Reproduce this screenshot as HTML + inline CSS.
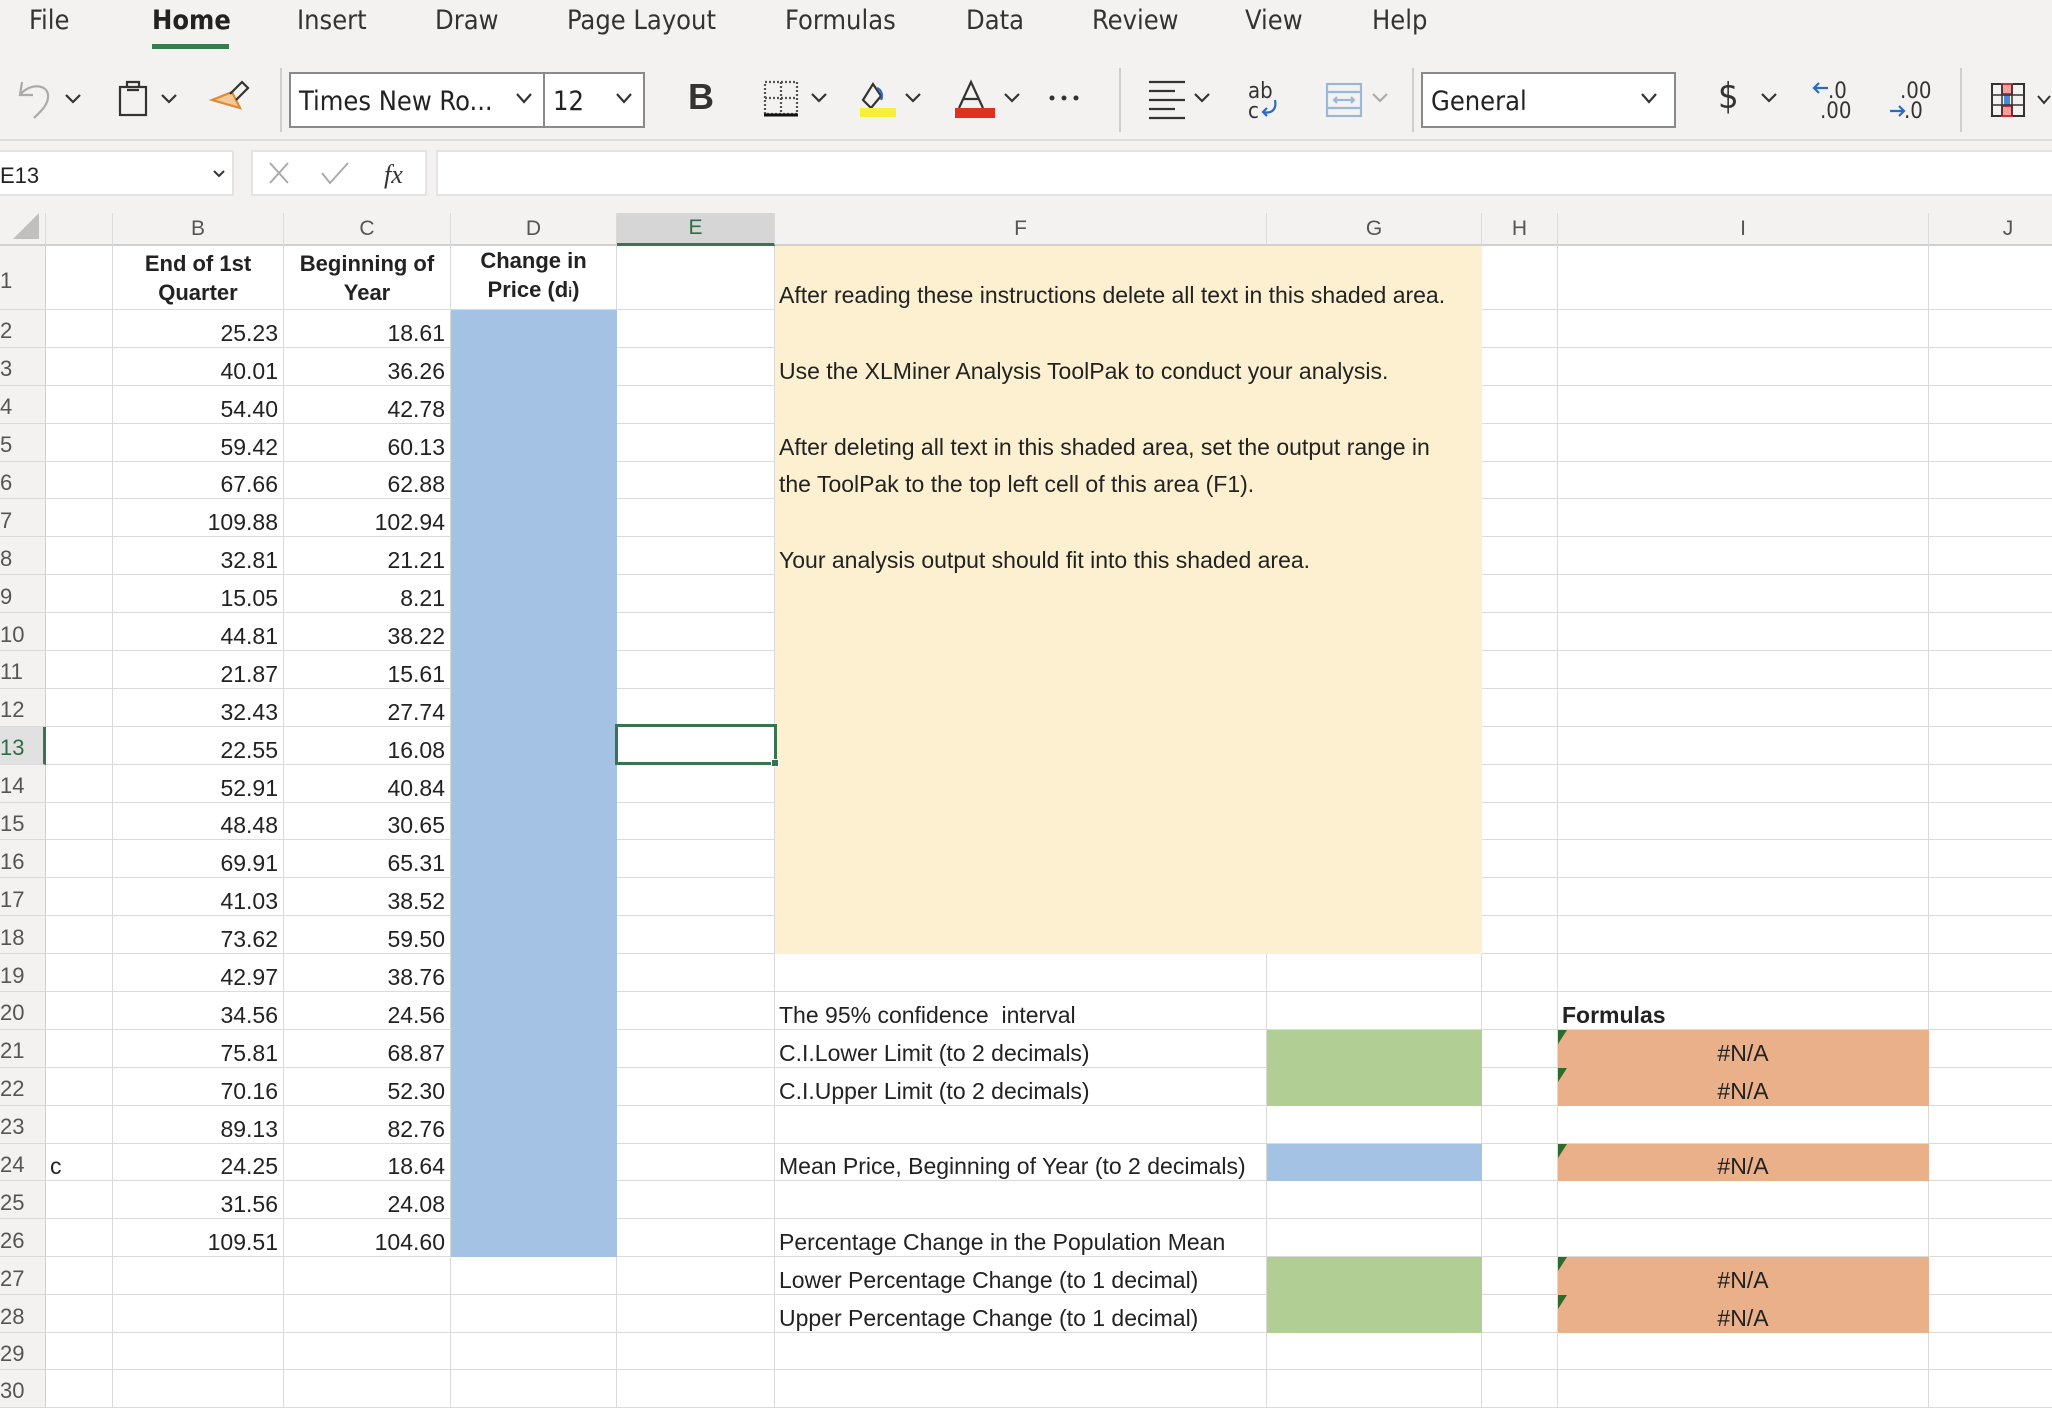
<!DOCTYPE html>
<html><head><meta charset="utf-8">
<style>
*{box-sizing:border-box;margin:0;padding:0}
body{width:2052px;height:1396px;overflow:hidden;background:#fff;font-family:"Liberation Sans",Arial,sans-serif;position:relative}
.top{position:absolute;left:0;top:0;width:2052px;height:141px;background:#f3f2f1;border-bottom:2px solid #dcdcdc}
.tab{position:absolute;top:5px;font-size:27px;color:#333;font-family:"DejaVu Sans Condensed","Liberation Sans",sans-serif;font-stretch:condensed}
.ul{position:absolute;left:152px;top:44px;width:77px;height:5px;background:#387b4f}
.ico{position:absolute}
.box{position:absolute;background:#fff;border:2px solid #8a8a8a;font-size:27px;color:#222;font-family:"DejaVu Sans Condensed","Liberation Sans",sans-serif}
.sep{position:absolute;top:68px;width:2px;height:64px;background:#cfcfcf}
.fbar{position:absolute;top:141px;left:0;width:2052px;height:72px;background:#f3f2f1}
.wb{position:absolute;background:#fff;border:2px solid #e3e3e3}
table{position:absolute;left:0;top:213px;border-collapse:separate;border-spacing:0;table-layout:fixed;width:2100px;font-size:23px;color:#222}
td,th{border-right:1.5px solid #dadada;border-bottom:1.5px solid #dadada;overflow:visible;white-space:nowrap;vertical-align:bottom;padding:0 4px 1px 4px;line-height:26px}
th{background:#f3f2f1;font-weight:normal;color:#555;font-size:22px}
thead th{text-align:center;vertical-align:middle;padding:0;height:33px;border-bottom:2px solid #d0d0d0;font-size:21px}
tbody th{text-align:left;padding-left:0;vertical-align:middle;padding-top:6px;padding-bottom:0;border-bottom:1.5px solid #dadada;border-right:1.5px solid #cfcfcf}
tbody tr{height:37.9px}
.n{text-align:right;padding-right:5px}
.d{background:#a4c2e4;border-color:#a4c2e4}
.y{background:#fcf0d0;border-right-color:#fcf0d0;border-bottom-color:#fcf0d0}
.g{background:#b1cf95;border-color:#b1cf95}
.o{background:#e9b08a;border-color:#e9b08a;text-align:center;position:relative}
.o::before{content:"";position:absolute;left:0;top:0;border-top:14px solid #2e6b2a;border-right:9px solid transparent}
.bl{background:#a4c2e4;border-color:#a4c2e4}
.hb{font-weight:bold;text-align:center;white-space:normal;line-height:29px;padding-bottom:2px;font-size:22px}
</style></head><body>
<div class="top">
<div class="tab" style="left:29px">File</div>
<div class="tab" style="left:152px;color:#222;font-weight:bold">Home</div>
<div class="tab" style="left:297px">Insert</div>
<div class="tab" style="left:435px">Draw</div>
<div class="tab" style="left:567px">Page Layout</div>
<div class="tab" style="left:785px">Formulas</div>
<div class="tab" style="left:966px">Data</div>
<div class="tab" style="left:1092px">Review</div>
<div class="tab" style="left:1245px">View</div>
<div class="tab" style="left:1372px">Help</div>
<div class="ul"></div>

<svg class="ico" style="left:14px;top:78px" width="150" height="42" viewBox="0 0 150 42" fill="none" stroke-width="2.2">
<path d="M8 4 L6 17 L19 17 M6 17 C16 4 36 6 34 20 C33 28 26 34 20 40" stroke="#aaa"/>
<path d="M52 17 L59 24 L66 17" stroke="#333"/>
<rect x="106" y="9" width="26" height="28" stroke="#333"/><path d="M113 9 V4 H125 V9 M113 12 H125" stroke="#333"/>
</svg>
<svg class="ico" style="left:160px;top:78px" width="100" height="42" viewBox="0 0 100 42" fill="none" stroke-width="2.2">
<path d="M2 17 L9 24 L16 17" stroke="#333"/>
<path d="M52 22 L72 14 L80 30 Z" fill="#f5c89a" stroke="#e08a30"/><path d="M70 16 L82 4 L88 10 L76 22" stroke="#333"/>
</svg>
<div class="sep" style="left:280px"></div>
<div class="box" style="left:289px;top:72px;width:256px;height:56px;padding:12px 8px">Times New Ro...</div>
<div class="box" style="left:543px;top:72px;width:102px;height:56px;padding:12px 8px">12</div>
<svg class="ico" style="left:515px;top:92px" width="120" height="14" fill="none" stroke="#333" stroke-width="2.2"><path d="M2 2 L9 10 L16 2 M102 2 L109 10 L116 2"/></svg>
<div style="position:absolute;left:688px;top:76px;font-size:36px;font-weight:bold;color:#333">B</div>
<svg class="ico" style="left:760px;top:78px" width="340" height="44" fill="none" stroke-width="2.2">
<rect x="5" y="4" width="32" height="32" stroke="#555" stroke-dasharray="2 2"/><path d="M21 4 V36 M5 20 H37" stroke="#555" stroke-dasharray="2 2"/><path d="M4 37 H38" stroke="#111" stroke-width="3"/>
<path d="M52 16 L59 23 L66 16" stroke="#333"/>
<path d="M103 22 L113 6 L121 18 L111 30 Z" stroke="#333"/><path d="M117 10 C122 12 123 18 121 22" stroke="#2a6bbf"/><rect x="100" y="30" width="36" height="9" fill="#f8ef3a" stroke="none"/>
<path d="M146 16 L153 23 L160 16" stroke="#333"/>
<path d="M199 30 L211 4 L223 30 M203 21 H219" stroke="#333"/><rect x="195" y="30" width="40" height="10" fill="#e03020" stroke="none"/>
<path d="M245 16 L252 23 L259 16" stroke="#333"/>
<circle cx="292" cy="20" r="2.5" fill="#333" stroke="none"/><circle cx="304" cy="20" r="2.5" fill="#333" stroke="none"/><circle cx="316" cy="20" r="2.5" fill="#333" stroke="none"/>
</svg>
<div class="sep" style="left:1119px"></div>
<svg class="ico" style="left:1145px;top:78px" width="260" height="44" fill="none" stroke-width="2.2">
<path d="M4 4 H40 M4 13 H30 M4 22 H40 M4 31 H30 M4 40 H40" stroke="#333"/>
<path d="M50 16 L57 23 L64 16" stroke="#333"/>
<text x="103" y="20" font-size="22" fill="#333" stroke="none" font-family="DejaVu Sans Condensed">ab</text><text x="103" y="40" font-size="22" fill="#333" stroke="none" font-family="DejaVu Sans Condensed">c</text><path d="M130 22 C132 32 126 36 118 34 M122 30 L118 34 L122 38" stroke="#2a6bbf"/>
<rect x="182" y="6" width="34" height="32" stroke="#9ab8d8"/><path d="M182 14 H216 M182 30 H216 M190 22 H208 M192 19 L189 22 L192 25 M206 19 L209 22 L206 25" stroke="#9ab8d8"/>
<path d="M228 16 L235 23 L242 16" stroke="#aaa"/>
</svg>
<div class="sep" style="left:1412px"></div>
<div class="box" style="left:1421px;top:72px;width:255px;height:56px;padding:12px 8px">General</div>
<svg class="ico" style="left:1640px;top:92px" width="24" height="14" fill="none" stroke="#333" stroke-width="2.2"><path d="M2 2 L9 10 L16 2"/></svg>
<div style="position:absolute;left:1718px;top:76px;font-size:36px;color:#333;font-family:'DejaVu Sans Condensed',sans-serif">$</div>
<svg class="ico" style="left:1756px;top:78px" width="300" height="44" fill="none" stroke-width="2.2">
<path d="M6 16 L13 23 L20 16" stroke="#333"/>
<path d="M58 10 H72 M63 5 L58 10 L63 15" stroke="#2a6bbf"/>
<text x="72" y="20" font-size="22" fill="#333" stroke="none" font-family="DejaVu Sans Condensed">.0</text>
<text x="64" y="40" font-size="22" fill="#333" stroke="none" font-family="DejaVu Sans Condensed">.00</text>
<text x="144" y="20" font-size="22" fill="#333" stroke="none" font-family="DejaVu Sans Condensed">.00</text>
<path d="M134 33 H148 M143 28 L148 33 L143 38" stroke="#2a6bbf"/>
<text x="148" y="40" font-size="22" fill="#333" stroke="none" font-family="DejaVu Sans Condensed">.0</text>
</svg>
<div class="sep" style="left:1960px"></div>
<svg class="ico" style="left:1988px;top:82px" width="64" height="40" fill="none" stroke-width="2">
<rect x="4" y="2" width="32" height="32" stroke="#333"/><rect x="14" y="2" width="10" height="10" fill="#f2a0a0" stroke="#d03030"/><rect x="14" y="24" width="10" height="10" fill="#f2a0a0" stroke="#d03030"/><rect x="16" y="13" width="6" height="10" fill="#4a8ad8" stroke="none"/>
<path d="M4 13 H36 M4 23 H36 M14 2 V34 M24 2 V34" stroke="#333" stroke-width="1.5"/>
<path d="M50 14 L56 21 L62 14" stroke="#333"/>
</svg>
</div>
<div class="fbar">
<div class="wb" style="left:-2px;top:9px;width:236px;height:46px;font-size:22px;padding:11px 0 0 0;color:#222">E13</div>
<svg class="ico" style="left:212px;top:28px" width="14" height="10" fill="none" stroke="#333" stroke-width="2"><path d="M2 2 L7 7 L12 2"/></svg>
<div class="wb" style="left:251px;top:9px;width:176px;height:46px"></div>
<svg class="ico" style="left:266px;top:18px" width="150" height="30" fill="none" stroke="#aaa" stroke-width="2"><path d="M4 4 L22 24 M22 4 L4 24 M56 14 L64 24 L82 4"/><text x="118" y="24" font-size="26" fill="#333" stroke="none" font-style="italic" font-family="Liberation Serif">fx</text></svg>
<div class="wb" style="left:436px;top:9px;width:1630px;height:46px"></div>
</div>

<table>
<colgroup><col style="width:46px"><col style="width:67px"><col style="width:171px"><col style="width:167px"><col style="width:166px"><col style="width:158px"><col style="width:492px"><col style="width:215px"><col style="width:76px"><col style="width:371px"><col style="width:171px"></colgroup>
<thead><tr><th style="position:relative"><svg style="position:absolute;right:4px;bottom:3px" width="30" height="28"><path d="M28 0 V26 H2 Z" fill="#c0c0c0"/></svg></th><th></th><th>B</th><th>C</th><th>D</th><th style="background:#d6d6d6;color:#2f6e44;border-bottom:3px solid #3a7350">E</th><th>F</th><th>G</th><th>H</th><th>I</th><th style="padding-right:12px">J</th></tr></thead>
<tbody>
<tr style="height:64px"><th>1</th><td></td><td class="hb">End of 1st Quarter</td><td class="hb">Beginning of Year</td><td class="hb">Change in Price (d<span style="font-size:14px">i</span>)</td><td></td><td class="y">After reading these instructions delete all text in this shaded area.</td><td class="y"></td><td></td><td></td><td></td></tr>
<tr><th>2</th><td></td><td class="n">25.23</td><td class="n">18.61</td><td class="d"></td><td></td><td class="y"></td><td class="y"></td><td></td><td></td><td></td></tr>
<tr><th>3</th><td></td><td class="n">40.01</td><td class="n">36.26</td><td class="d"></td><td></td><td class="y">Use the XLMiner Analysis ToolPak to conduct your analysis.</td><td class="y"></td><td></td><td></td><td></td></tr>
<tr><th>4</th><td></td><td class="n">54.40</td><td class="n">42.78</td><td class="d"></td><td></td><td class="y"></td><td class="y"></td><td></td><td></td><td></td></tr>
<tr><th>5</th><td></td><td class="n">59.42</td><td class="n">60.13</td><td class="d"></td><td></td><td class="y">After deleting all text in this shaded area, set the output range in</td><td class="y"></td><td></td><td></td><td></td></tr>
<tr><th>6</th><td></td><td class="n">67.66</td><td class="n">62.88</td><td class="d"></td><td></td><td class="y">the ToolPak to the top left cell of this area (F1).</td><td class="y"></td><td></td><td></td><td></td></tr>
<tr><th>7</th><td></td><td class="n">109.88</td><td class="n">102.94</td><td class="d"></td><td></td><td class="y"></td><td class="y"></td><td></td><td></td><td></td></tr>
<tr><th>8</th><td></td><td class="n">32.81</td><td class="n">21.21</td><td class="d"></td><td></td><td class="y">Your analysis output should fit into this shaded area.</td><td class="y"></td><td></td><td></td><td></td></tr>
<tr><th>9</th><td></td><td class="n">15.05</td><td class="n">8.21</td><td class="d"></td><td></td><td class="y"></td><td class="y"></td><td></td><td></td><td></td></tr>
<tr><th>10</th><td></td><td class="n">44.81</td><td class="n">38.22</td><td class="d"></td><td></td><td class="y"></td><td class="y"></td><td></td><td></td><td></td></tr>
<tr><th>11</th><td></td><td class="n">21.87</td><td class="n">15.61</td><td class="d"></td><td></td><td class="y"></td><td class="y"></td><td></td><td></td><td></td></tr>
<tr><th>12</th><td></td><td class="n">32.43</td><td class="n">27.74</td><td class="d"></td><td></td><td class="y"></td><td class="y"></td><td></td><td></td><td></td></tr>
<tr><th style="background:#e1e1e1;color:#2f6e44;border-right:3px solid #3a7350">13</th><td></td><td class="n">22.55</td><td class="n">16.08</td><td class="d"></td><td></td><td class="y"></td><td class="y"></td><td></td><td></td><td></td></tr>
<tr><th>14</th><td></td><td class="n">52.91</td><td class="n">40.84</td><td class="d"></td><td></td><td class="y"></td><td class="y"></td><td></td><td></td><td></td></tr>
<tr><th>15</th><td></td><td class="n">48.48</td><td class="n">30.65</td><td class="d"></td><td></td><td class="y"></td><td class="y"></td><td></td><td></td><td></td></tr>
<tr><th>16</th><td></td><td class="n">69.91</td><td class="n">65.31</td><td class="d"></td><td></td><td class="y"></td><td class="y"></td><td></td><td></td><td></td></tr>
<tr><th>17</th><td></td><td class="n">41.03</td><td class="n">38.52</td><td class="d"></td><td></td><td class="y"></td><td class="y"></td><td></td><td></td><td></td></tr>
<tr><th>18</th><td></td><td class="n">73.62</td><td class="n">59.50</td><td class="d"></td><td></td><td class="y"></td><td class="y"></td><td></td><td></td><td></td></tr>
<tr><th>19</th><td></td><td class="n">42.97</td><td class="n">38.76</td><td class="d"></td><td></td><td></td><td></td><td></td><td></td><td></td></tr>
<tr><th>20</th><td></td><td class="n">34.56</td><td class="n">24.56</td><td class="d"></td><td></td><td>The 95% confidence &nbsp;interval</td><td></td><td></td><td style="font-weight:bold">Formulas</td><td></td></tr>
<tr><th>21</th><td></td><td class="n">75.81</td><td class="n">68.87</td><td class="d"></td><td></td><td>C.I.Lower Limit (to 2 decimals)</td><td class="g"></td><td></td><td class="o">#N/A</td><td></td></tr>
<tr><th>22</th><td></td><td class="n">70.16</td><td class="n">52.30</td><td class="d"></td><td></td><td>C.I.Upper Limit (to 2 decimals)</td><td class="g"></td><td></td><td class="o">#N/A</td><td></td></tr>
<tr><th>23</th><td></td><td class="n">89.13</td><td class="n">82.76</td><td class="d"></td><td></td><td></td><td></td><td></td><td></td><td></td></tr>
<tr><th>24</th><td>c</td><td class="n">24.25</td><td class="n">18.64</td><td class="d"></td><td></td><td>Mean Price, Beginning of Year (to 2 decimals)</td><td class="bl"></td><td></td><td class="o">#N/A</td><td></td></tr>
<tr><th>25</th><td></td><td class="n">31.56</td><td class="n">24.08</td><td class="d"></td><td></td><td></td><td></td><td></td><td></td><td></td></tr>
<tr><th>26</th><td></td><td class="n">109.51</td><td class="n">104.60</td><td class="d"></td><td></td><td>Percentage Change in the Population Mean</td><td></td><td></td><td></td><td></td></tr>
<tr><th>27</th><td></td><td></td><td></td><td></td><td></td><td>Lower Percentage Change (to 1 decimal)</td><td class="g"></td><td></td><td class="o">#N/A</td><td></td></tr>
<tr><th>28</th><td></td><td></td><td></td><td></td><td></td><td>Upper Percentage Change (to 1 decimal)</td><td class="g"></td><td></td><td class="o">#N/A</td><td></td></tr>
<tr style="height:37px"><th>29</th><td></td><td></td><td></td><td></td><td></td><td></td><td></td><td></td><td></td><td></td></tr>
<tr><th>30</th><td></td><td></td><td></td><td></td><td></td><td></td><td></td><td></td><td></td><td></td></tr>
</tbody></table>
<div style="position:absolute;left:615px;top:724px;width:162px;height:41px;border:3px solid #3a7350"></div>
<div style="position:absolute;left:771px;top:759px;width:8px;height:8px;background:#3a7350;border:1px solid #fff"></div>
</body></html>
